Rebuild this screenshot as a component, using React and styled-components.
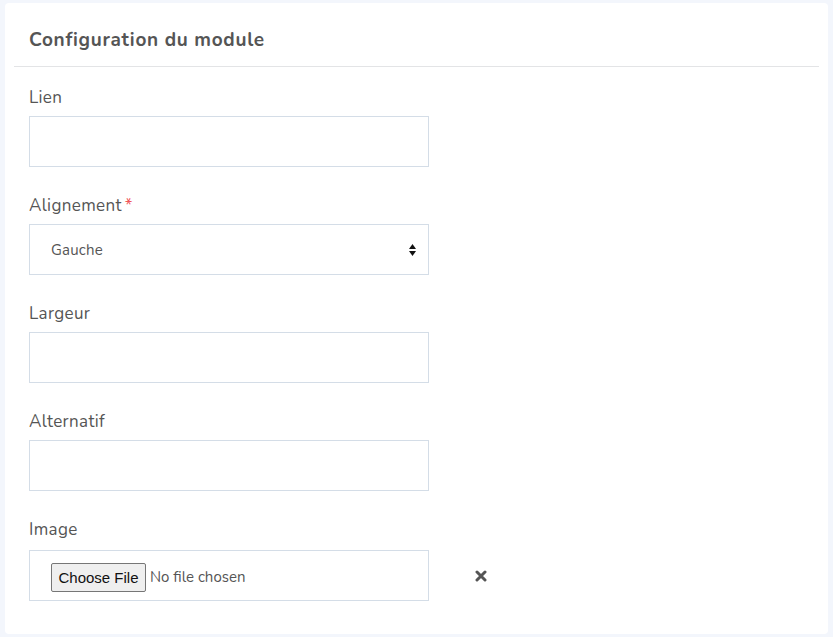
import React from "react";
import styled, { createGlobalStyle } from "styled-components";

const Global = createGlobalStyle`
  html, body { margin: 0; padding: 0; background: #f3f6fc; }
  body { font-family: "Nunito", "Lato", "Noto Sans", sans-serif; color: #555; }
  * { box-sizing: border-box; }
`;

const Card = styled.div`
  margin: 3px 5px;
  background: #fff;
  border-radius: 4px;
  height: 631px;
  display: flex;
  flex-direction: column;
`;

const Header = styled.div`
  margin: 0 9px;
  padding: 25px 15px 14px;
  border-bottom: 1px solid #e3e4e6;
`;

const Title = styled.h3`
  margin: 0;
  font-size: 19px;
  letter-spacing: 0.7px;
  line-height: 24px;
  font-weight: 700;
  color: #555;
`;

const Body = styled.div`
  padding: 18px 24px 34px;
  display: flex;
  flex-direction: column;
  gap: 26px;
`;

const Group = styled.div`
  display: flex;
  flex-direction: column;
`;

const Label = styled.label`
  font-size: 17px;
  letter-spacing: 0.35px;
  line-height: 25px;
  margin-bottom: ${(p) => (p.$extra ? 8 : 6)}px;
  color: #555;
`;

const Star = styled.span`
  color: #f0575a;
  margin-left: 3px;
`;

const Row = styled.div`
  display: flex;
  align-items: center;
  gap: 46px;
`;

const Box = styled.div`
  width: 400px;
  height: 51px;
  border: 1px solid #d4dde7;
  background: #fff;
  display: flex;
  align-items: center;
  padding: ${(p) => (p.$file ? "3px 12px 0 21px" : "0 12px 0 21px")};
  font-size: 15px;
  letter-spacing: 0.2px;
  color: #555;
`;

const Input = styled.input`
  width: 400px;
  height: 51px;
  border: 1px solid #d4dde7;
  background: #fff;
  outline: none;
  padding: 0 21px;
  font: inherit;
`;

const SelectText = styled.span`
  flex: 1;
`;

const FileButton = styled.span`
  display: inline-flex;
  align-items: center;
  justify-content: center;
  height: 29px;
  width: 95px;
  border: 1px solid #767676;
  border-radius: 2px;
  background: #efefef;
  font-family: "Liberation Sans", Arial, sans-serif;
  font-size: 15px;
  letter-spacing: 0;
  color: #111;
`;

const FileText = styled.span`
  margin-left: 4px;
  font-size: 15px;
  letter-spacing: 0;
  color: #555;
`;

const Remove = styled.span`
  display: inline-flex;
  width: 12px;
  height: 12px;
  color: #555;
`;

export default function App() {
  return (
    <>
      <Global />
      <Card>
        <Header>
          <Title>Configuration du module</Title>
        </Header>
        <Body>
          <Group>
            <Label>Lien</Label>
            <Input type="text" />
          </Group>
          <Group>
            <Label>
              Alignement<Star>*</Star>
            </Label>
            <Box>
              <SelectText>Gauche</SelectText>
              <svg width="7" height="14" viewBox="0 0 7 14">
                <path d="M3.5 1 L7 6 L0 6 Z" fill="#111" />
                <path d="M0 8 L7 8 L3.5 13 Z" fill="#111" />
              </svg>
            </Box>
          </Group>
          <Group>
            <Label>Largeur</Label>
            <Input type="text" />
          </Group>
          <Group>
            <Label>Alternatif</Label>
            <Input type="text" />
          </Group>
          <Group>
            <Label $extra>Image</Label>
            <Row>
              <Box $file>
                <FileButton>Choose File</FileButton>
                <FileText>No file chosen</FileText>
              </Box>
              <Remove>
                <svg width="12" height="12" viewBox="0 0 12 12">
                  <path
                    d="M2 2 L10 10 M10 2 L2 10"
                    stroke="#555"
                    strokeWidth="3"
                    strokeLinecap="round"
                  />
                </svg>
              </Remove>
            </Row>
          </Group>
        </Body>
      </Card>
    </>
  );
}
